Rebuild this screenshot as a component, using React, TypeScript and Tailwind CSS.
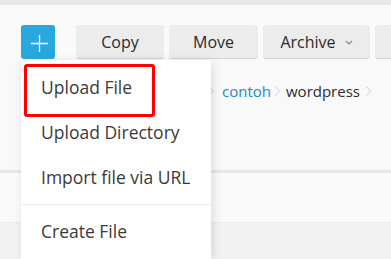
const ToolButton: React.FC<{ label: string; width: string; caret?: boolean }> = ({
  label,
  width,
  caret,
}) => (
  <button
    className={`flex h-[34px] shrink-0 items-center justify-center gap-[9px] rounded-[3px] border-b border-[#d2d2d2] bg-[#ececec] text-[16px] text-[#2b2b2b] ${width}`}
  >
    <span>{label}</span>
    {caret && (
      <svg width="8" height="5" viewBox="0 0 8 5" className="mt-[1px]">
        <path d="M1 1l3 3 3-3" fill="none" stroke="#888" strokeWidth="1.2" />
      </svg>
    )}
  </button>
);

const Chevron: React.FC<{ className?: string }> = ({ className }) => (
  <svg width="5" height="10" viewBox="0 0 5 10" className={`shrink-0 ${className ?? ""}`}>
    <path d="M0.5 0.5l4 4.5-4 4.5" fill="none" stroke="#cccccc" strokeWidth="1" />
  </svg>
);

const menuItems = ["Upload File", "Upload Directory", "Import file via URL"];

export default function App() {
  return (
    <div
      className="relative h-[259px] w-[391px] overflow-hidden bg-[#fafafa]"
      style={{ fontFamily: '"Open Sans", "Noto Sans", sans-serif' }}
    >
      <div className="h-[5px] bg-[#e9e9e9]" />

      {/* toolbar */}
      <div className="flex pl-[21px] pt-[20px]">
        <button className="flex h-[34px] w-[34px] shrink-0 items-center justify-center rounded-[3px] bg-[#29a8de]">
          <svg width="17" height="17" viewBox="0 0 17 17" className="ml-[2px] mt-[2px]">
            <path d="M8.5 0v17M0 8.5h17" stroke="#fff" strokeWidth="1.3" />
          </svg>
        </button>
        <div className="ml-[21px] flex gap-[5px]">
          <ToolButton label="Copy" width="w-[88px]" />
          <ToolButton label="Move" width="w-[89px]" />
          <ToolButton label="Archive" width="w-[107px]" caret />
          <ToolButton label="" width="w-[40px]" />
        </div>
      </div>

      {/* content */}
      <div className="mt-[1px] flex h-[110px] items-start bg-[#f9f9f9] pl-[209px] pt-[21px] text-[15px] leading-[20px] text-[#2d2d2d]">
        <div className="flex items-center">
          <Chevron className="mr-[8px]" />
          <span className="text-[#1b8bc5]">contoh</span>
          <Chevron className="ml-[4px] mr-[6px]" />
          <span>wordpress</span>
          <Chevron className="ml-[6px]" />
        </div>
      </div>
      <div className="h-[3px] bg-[#e8e8e8]" />
      <div className="h-[50px] border-b border-[#ebebeb] bg-[#fafafa]" />
      <div className="h-[40px] bg-[#f3f3f3]" />

      {/* dropdown menu */}
      <div className="absolute left-[21px] top-[60px] w-[190px] bg-white py-[5px] text-[17.5px] text-[#3a3a3a] shadow-[2px_2px_10px_rgba(0,0,0,0.12)]">
        {menuItems.map((item) => (
          <div key={item} className="flex h-[45px] items-center pl-[20px]">
            {item}
          </div>
        ))}
        <div className="my-[4px] h-px bg-[#e9e9e9]" />
        <div className="flex h-[45px] items-center pl-[20px]">Create File</div>
      </div>

      {/* annotation box */}
      <div className="absolute left-[24px] top-[64px] h-[53px] w-[131px] rounded-[3px] border-[3px] border-[#f00]" />
    </div>
  );
}
